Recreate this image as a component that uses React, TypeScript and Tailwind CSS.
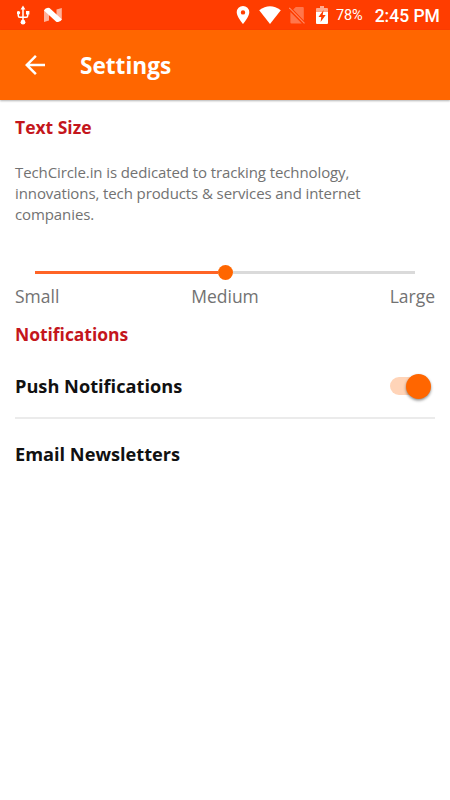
import React from "react";

function StatusBar() {
  return (
    <div className="flex h-[30px] items-center bg-[#ff3d00] text-white font-[Roboto,sans-serif]">
      <svg className="ml-[17px] h-[20px] w-[13px]" viewBox="0 0 13 20" fill="none" stroke="white" strokeWidth="1.5">
        <path d="M6 2.5V17M1.3 7.5V10.8Q1.3 12.3 2.8 12.3H9.2Q10.7 12.3 10.7 10.8V7.5" />
        <path d="M6 .6L8.4 4.4H3.6ZM9 6H12.4V9.4H9Z" fill="white" stroke="none" />
        <circle cx="1.5" cy="7.8" r="1.7" fill="white" stroke="none" />
        <circle cx="6" cy="17.2" r="2.4" fill="white" stroke="none" />
      </svg>
      <svg className="ml-[13px] h-[16px] w-[20px]" viewBox="0 0 20 16">
        <path d="M1 3L6 1V13.5L1 15ZM13.5 2.5L18.8 1V13L13.5 15Z" fill="white" opacity=".6" />
        <path d="M1 3.6Q2.5 .2 6.5 1L18.8 12.2Q17.2 16 13.2 14.8Z" fill="white" />
      </svg>
      <svg className="ml-[173px] h-[20px] w-[14px]" viewBox="0 0 14 20">
        <path fillRule="evenodd" d="M7 1a6.3 6.3 0 0 0-6.3 6.3C.7 12 7 19 7 19s6.3-7 6.3-11.7A6.3 6.3 0 0 0 7 1Zm0 4.2a2.2 2.2 0 1 1 0 4.4 2.2 2.2 0 0 1 0-4.4Z" fill="white" />
      </svg>
      <svg className="ml-[9px] h-[18px] w-[22px]" viewBox="0 0 22 18">
        <path d="M.2 4.2Q11-3.8 21.8 4.2L11 18Z" fill="white" />
      </svg>
      <svg className="ml-[8px] h-[18px] w-[16px]" viewBox="0 0 16 18">
        <path d="M4.2 3.6L6.8 1H13.8q1 0 1 1v12.5ZM1.4 6L12.8 17.6H2.4q-1 0-1-1Z" fill="#ff764c" />
        <path d="M.3 1.8L15.5 17.4" stroke="#ff8a65" strokeWidth="1.2" />
      </svg>
      <svg className="ml-[11px] h-[20px] w-[12px]" viewBox="0 0 12 20">
        <path d="M0 6.5h12v11.5q0 1-1 1H1q-1 0-1-1Z" fill="white" />
        <path d="M0 6.5V4.1q0-1 1-1h3V1h4v2.1h3q1 0 1 1V6.5Z" fill="#ffa98e" />
        <path d="M7.6 5L2.5 12H5.3L4.6 17L9.7 10H6.7Z" fill="#ff3d00" />
      </svg>
      <span className="ml-[8px] mt-[2px] text-[14.5px] leading-none tracking-[-0.1px]">78%</span>
      <span className="ml-[12px] mt-[3px] text-[17.5px] leading-none font-medium whitespace-nowrap">2:45 PM</span>
    </div>
  );
}

function Header() {
  return (
    <header className="relative z-10 flex h-[70px] items-center bg-[#ff6600] text-white shadow-[0_1px_2px_rgba(0,0,0,0.3)]">
      <svg className="ml-[20px] h-[30px] w-[30px]" viewBox="0 0 24 24" fill="white">
        <path d="M20 11H7.83l5.59-5.59L12 4l-8 8 8 8 1.41-1.41L7.83 13H20v-2z" />
      </svg>
      <h1 className="mt-[2px] ml-[30px] text-[22.6px] leading-[30px] font-bold">Settings</h1>
    </header>
  );
}

function TextSizeSlider() {
  return (
    <div className="mt-[41px]">
      <div className="mx-5 flex h-[16px] items-center">
        <div className="h-[2.5px] flex-1 bg-[#ff6426]" />
        <div className="size-[15px] rounded-full bg-[#ff6600]" />
        <div className="h-[2.5px] flex-1 bg-[#dadada]" />
      </div>
      <div className="mt-[3px] grid grid-cols-3 text-[17.5px] leading-[24px] text-[#727272]">
        <span>Small</span>
        <span className="text-center">Medium</span>
        <span className="text-right">Large</span>
      </div>
    </div>
  );
}

export default function App() {
  return (
    <div className="h-[800px] w-[450px] overflow-hidden bg-white font-['Open_Sans',sans-serif]">
      <StatusBar />
      <Header />
      <main className="px-[15px] pt-[15px]">
        <h2 className="text-[17.5px] leading-[24px] font-bold text-[#c4161c]">Text Size</h2>
        <p className="mt-[23px] h-[61.5px] w-[400px] text-[15px] leading-[20.75px] tracking-[-0.1px] text-[#727272]">
          TechCircle.in is dedicated to tracking technology,
          <br />
          innovations, tech products &amp; services and internet
          <br />
          companies.
        </p>
        <TextSizeSlider />
        <h2 className="mt-[14px] text-[17.5px] leading-[24px] font-bold tracking-[-0.04px] text-[#c4161c]">Notifications</h2>
        <div className="flex h-[73.5px] items-start justify-between border-b-2 border-[#ebebeb] pt-[28px]">
          <span className="text-[18.2px] leading-[24px] font-bold text-[#111]">Push Notifications</span>
          <button className="mr-[4.5px] flex h-[25px] w-[41px] items-center">
            <span className="h-[18px] w-[28px] rounded-l-full bg-[#ffd4b8]" />
            <span className="-ml-[12px] size-[25px] shrink-0 rounded-full bg-[#ff6600] shadow-[0_1.5px_3px_rgba(0,0,0,0.45)]" />
          </button>
        </div>
        <div className="mt-[22.5px] text-[18.2px] leading-[24px] font-bold text-[#111]">Email Newsletters</div>
      </main>
    </div>
  );
}
